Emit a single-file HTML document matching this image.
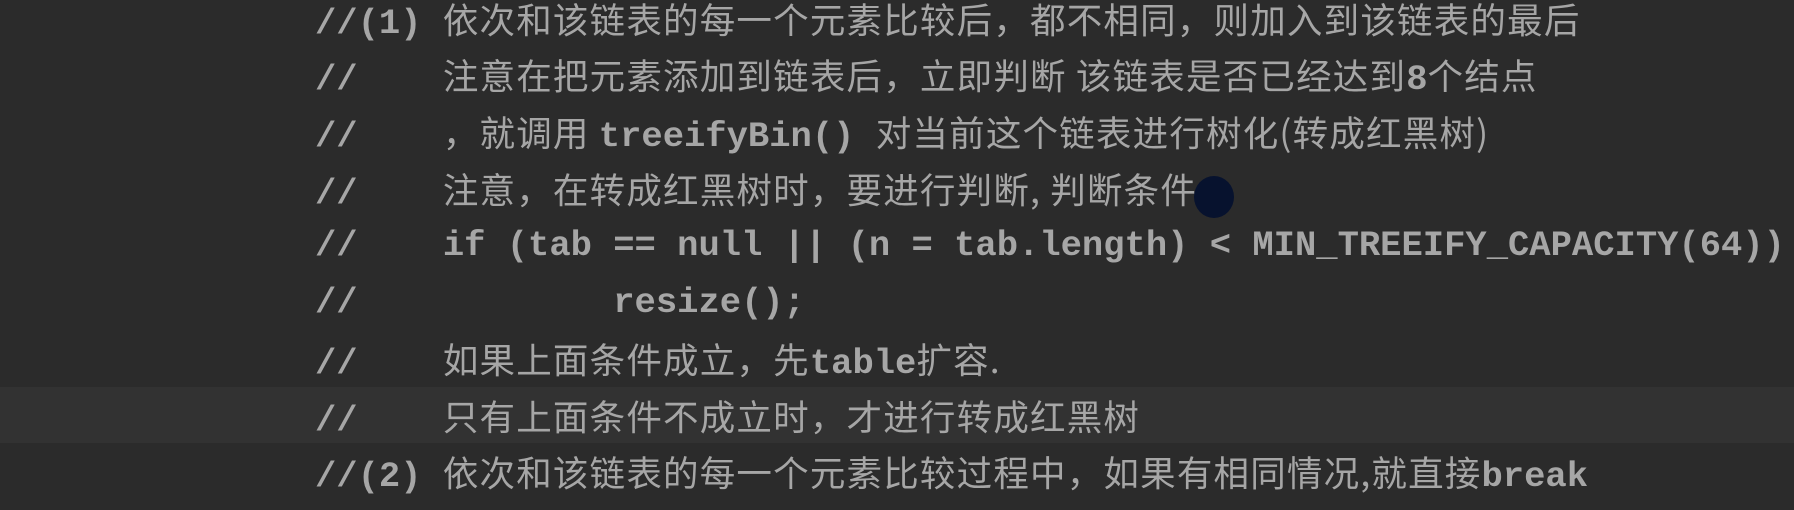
<!DOCTYPE html>
<html><head><meta charset="utf-8"><style>
body{margin:0;width:1794px;height:510px;background:#2b2b2b;overflow:hidden;position:relative}
.l{position:absolute;left:315px;height:57px;line-height:57px;white-space:pre;font-family:"Liberation Mono","Noto Sans CJK SC",monospace;font-size:35.5px;color:#a6a6a6;font-weight:bold}
.c{font-family:"Noto Sans CJK SC",sans-serif;font-weight:normal;letter-spacing:1.2px}
.hl{position:absolute;left:0;top:387px;width:1794px;height:56px;background:#323232}
.cur{position:absolute;left:1194px;top:176px;width:40px;height:42px;border-radius:50%;background:#07122e}
</style></head><body>
<div class="hl"></div>
<div class="cur"></div>
<div class="l" style="top:-10px">//(1) <span class="c">依次和该链表的每一个元素比较后，都不相同，则加入到该链表的最后</span></div>
<div class="l" style="top:46px">//    <span class="c">注意在把元素添加到链表后，立即判断 该链表是否已经达到</span>8<span class="c">个结点</span></div>
<div class="l" style="top:103px">//    <span class="c">，就调用 </span>treeifyBin() <span class="c">对当前这个链表进行树化(转成红黑树)</span></div>
<div class="l" style="top:160px">//    <span class="c">注意，在转成红黑树时，要进行判断, 判断条件</span></div>
<div class="l" style="top:217px">//    if (tab == null || (n = tab.length) &lt; MIN_TREEIFY_CAPACITY(64))</div>
<div class="l" style="top:274px">//            resize();</div>
<div class="l" style="top:330px">//    <span class="c">如果上面条件成立，先</span>table<span class="c">扩容.</span></div>
<div class="l" style="top:387px">//    <span class="c">只有上面条件不成立时，才进行转成红黑树</span></div>
<div class="l" style="top:443px">//(2) <span class="c">依次和该链表的每一个元素比较过程中，如果有相同情况,就直接</span>break</div>
</body></html>
